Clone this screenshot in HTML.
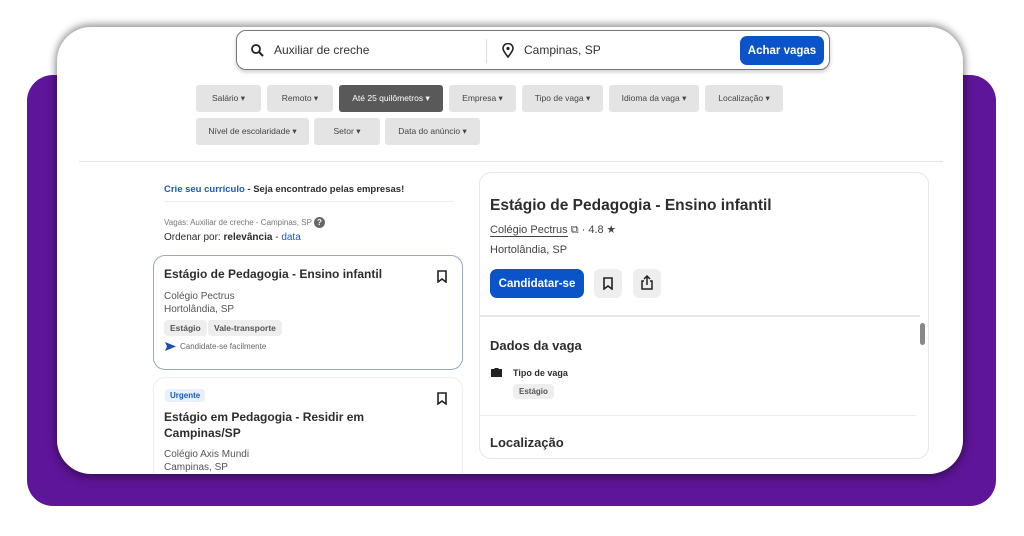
<!DOCTYPE html>
<html><head><meta charset="utf-8"><style>
*{box-sizing:border-box;margin:0;padding:0}
body{width:1024px;height:536px;background:#fff;position:relative;overflow:hidden;font-family:"Liberation Sans",sans-serif;color:#2d2d2d}
.purple{position:absolute;left:27px;top:75px;width:969px;height:431px;background:#5f1599;border-radius:26px}
.card{position:absolute;left:57px;top:27px;width:906px;height:447px;background:#fff;border-radius:34px;overflow:hidden;box-shadow:0 -3px 8px rgba(0,0,0,.35),0 4px 10px rgba(0,0,0,.35)}
.abs{position:absolute}
.search{left:179px;top:3px;width:594px;height:40px;border:1px solid #777;border-radius:10px;background:#fff;box-shadow:0 2px 4px rgba(0,0,0,.2)}
.search span{position:absolute;top:12px;font-size:12px;color:#333}
.btn{position:absolute;background:#0a53c8;color:#fff;font-weight:bold;border-radius:7px;font-size:12px;display:flex;align-items:center;justify-content:center}
.chip{position:absolute;height:27px;background:#e4e4e4;border-radius:3px;font-size:8.5px;color:#444;line-height:27px;text-align:center}
.chip.dark{background:#595959;color:#fff}
.t{position:absolute;white-space:nowrap}
.jc{position:absolute;border:1px solid #d6d6d6;border-radius:12px;background:#fff}
.tag{position:absolute;background:#eee;border-radius:4px;font-size:8.5px;font-weight:bold;color:#555;padding:3px 6px}
</style></head><body>
<div class="purple"></div>
<div class="card">
 <div class="abs search">
  <svg class="abs" style="left:14px;top:13px" width="13" height="13" viewBox="0 0 13 13"><circle cx="5" cy="5" r="4" fill="none" stroke="#222" stroke-width="1.8"/><path d="M8 8l4 4" stroke="#222" stroke-width="2"/></svg>
  <span style="left:37px">Auxiliar de creche</span>
  <div class="abs" style="left:249px;top:8px;width:1px;height:24px;background:#ddd"></div>
  <svg class="abs" style="left:265px;top:12px" width="12" height="15" viewBox="0 0 12 15"><path d="M6 14C2 9 1 7 1 5.5a5 5 0 0110 0C11 7 10 9 6 14z" fill="none" stroke="#222" stroke-width="1.6"/><circle cx="6" cy="5.5" r="1.6" fill="#222"/></svg>
  <span style="left:287px">Campinas, SP</span>
  <div class="btn" style="left:503px;top:5px;width:84px;height:29px;font-size:11.5px">Achar vagas</div>
 </div>
 <div class="chip" style="left:139px;top:58px;width:65px">Salário ▾</div>
 <div class="chip" style="left:210px;top:58px;width:66px">Remoto ▾</div>
 <div class="chip dark" style="left:282px;top:58px;width:104px">Até 25 quilômetros ▾</div>
 <div class="chip" style="left:392px;top:58px;width:67px">Empresa ▾</div>
 <div class="chip" style="left:465px;top:58px;width:81px">Tipo de vaga ▾</div>
 <div class="chip" style="left:552px;top:58px;width:90px">Idioma da vaga ▾</div>
 <div class="chip" style="left:648px;top:58px;width:78px">Localização ▾</div>
 <div class="chip" style="left:139px;top:91px;width:113px">Nível de escolaridade ▾</div>
 <div class="chip" style="left:257px;top:91px;width:66px">Setor ▾</div>
 <div class="chip" style="left:328px;top:91px;width:95px">Data do anúncio ▾</div>
 <div class="abs" style="left:22px;top:134px;width:864px;height:1px;background:#e4e4e4"></div>

 <div class="t" style="left:107px;top:157px;font-size:9.5px;font-weight:bold"><span style="color:#1a5bb8">Crie seu currículo</span> - Seja encontrado pelas empresas!</div>
 <div class="abs" style="left:107px;top:174px;width:290px;height:1px;background:#eee"></div>
 <div class="t" style="left:107px;top:190px;font-size:8px;color:#777">Vagas: Auxiliar de creche - Campinas, SP <span style="display:inline-block;width:11px;height:11px;border-radius:50%;background:#666;color:#fff;font-size:8px;text-align:center;line-height:11px;font-weight:bold">?</span></div>
 <div class="t" style="left:107px;top:205px;font-size:10px">Ordenar por: <b>relevância</b> - <span style="color:#1a5bb8">data</span></div>

 <div class="jc" style="left:96px;top:228px;width:310px;height:115px;border-color:#9aa8b8">
  <div class="t" style="left:10px;top:11px;font-size:12px;font-weight:bold">Estágio de Pedagogia - Ensino infantil</div>
  <svg class="abs" style="left:283px;top:14px" width="10" height="13" viewBox="0 0 10 13"><path d="M1 1h8v11L5 9 1 12z" fill="none" stroke="#222" stroke-width="1.6"/></svg>
  <div class="t" style="left:10px;top:35px;font-size:10px;color:#555">Colégio Pectrus</div>
  <div class="t" style="left:10px;top:48px;font-size:10px;color:#555">Hortolândia, SP</div>
  <div class="tag" style="left:10px;top:64px">Estágio</div>
  <div class="tag" style="left:54px;top:64px">Vale-transporte</div>
  <svg class="abs" style="left:11px;top:86px" width="11" height="9" viewBox="0 0 11 9"><path d="M0 0l11 4.5L0 9l2-4.5z" fill="#1a4fb0"/></svg>
  <div class="t" style="left:26px;top:86px;font-size:8px;color:#666">Candidate-se facilmente</div>
 </div>
 <div class="jc" style="left:96px;top:350px;width:310px;height:120px;border-color:#eee">
  <div class="t" style="left:11px;top:11px;font-size:8px;font-weight:bold;color:#1a5bb8;background:#e8f0fc;padding:2px 5px;border-radius:4px">Urgente</div>
  <svg class="abs" style="left:283px;top:14px" width="10" height="13" viewBox="0 0 10 13"><path d="M1 1h8v11L5 9 1 12z" fill="none" stroke="#222" stroke-width="1.6"/></svg>
  <div class="t" style="left:10px;top:31px;font-size:12px;font-weight:bold;line-height:16px">Estágio em Pedagogia - Residir em<br>Campinas/SP</div>
  <div class="t" style="left:10px;top:71px;font-size:10px;color:#555">Colégio Axis Mundi</div>
  <div class="t" style="left:10px;top:84px;font-size:10px;color:#555">Campinas, SP</div>
 </div>

 <div class="jc" style="left:422px;top:145px;width:450px;height:287px;border-color:#e8e8e8">
  <div class="t" style="left:10px;top:24px;font-size:15.5px;font-weight:bold;color:#2d2d2d">Estágio de Pedagogia - Ensino infantil</div>
  <div class="t" style="left:10px;top:51px;font-size:11px;color:#444"><span style="border-bottom:1px solid #444">Colégio Pectrus</span> ⧉ · 4.8 ★</div>
  <div class="t" style="left:10px;top:71px;font-size:11px;color:#444">Hortolândia, SP</div>
  <div class="btn" style="left:10px;top:96px;width:94px;height:29px;font-size:11.5px">Candidatar-se</div>
  <div class="abs" style="left:114px;top:96px;width:28px;height:29px;background:#eee;border-radius:6px"><svg class="abs" style="left:9px;top:8px" width="10" height="13" viewBox="0 0 10 13"><path d="M1 1h8v11L5 9 1 12z" fill="none" stroke="#222" stroke-width="1.6"/></svg></div>
  <div class="abs" style="left:153px;top:96px;width:28px;height:29px;background:#eee;border-radius:6px"><svg class="abs" style="left:8px;top:6px" width="12" height="15" viewBox="0 0 12 15"><path d="M3 6H1v8h10V6H9M6 10V1M3 4l3-3 3 3" fill="none" stroke="#222" stroke-width="1.5"/></svg></div>
  <div class="abs" style="left:0;top:142px;width:440px;height:2px;background:#e6e6e6"></div>
  <div class="abs" style="left:440px;top:150px;width:5px;height:22px;background:#888;border-radius:3px"></div>
  <div class="t" style="left:10px;top:165px;font-size:13px;font-weight:bold">Dados da vaga</div>
  <svg class="abs" style="left:11px;top:194px" width="11" height="10" viewBox="0 0 11 10"><path d="M3.5 2V1h4v1H11v8H0V2z" fill="#222"/></svg>
  <div class="t" style="left:33px;top:195px;font-size:9px;font-weight:bold">Tipo de vaga</div>
  <div class="tag" style="left:33px;top:211px;font-size:8px">Estágio</div>
  <div class="abs" style="left:0;top:242px;width:436px;height:1px;background:#eee"></div>
  <div class="t" style="left:10px;top:262px;font-size:13px;font-weight:bold">Localização</div>
 </div>
</div>
</body></html>
